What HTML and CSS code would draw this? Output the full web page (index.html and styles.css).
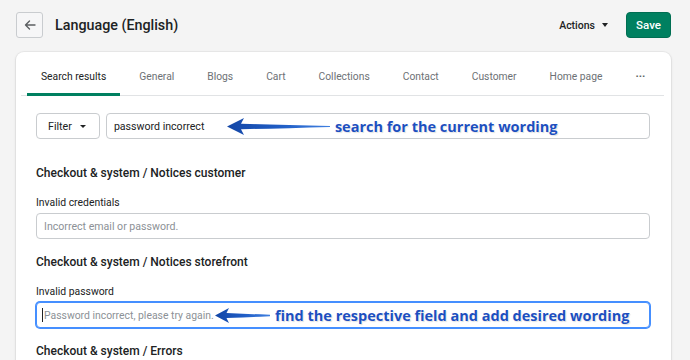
FILE: index.html
```html
<!DOCTYPE html>
<html lang="en">
<head>
  <meta charset="UTF-8">
  <meta name="viewport" content="width=device-width, initial-scale=1.0">
  <title>Language (English)</title>
  <link rel="stylesheet" href="styles.css">
</head>
<body>
  <header class="topbar">
    <button class="back-btn" aria-label="Back">
      <svg width="14" height="14" viewBox="0 0 14 14" fill="none" stroke="#5c5f62" stroke-width="1.4" stroke-linecap="round" stroke-linejoin="round">
        <path d="M12 7H2.5M6.5 3L2.5 7l4 4"/>
      </svg>
    </button>
    <h1 class="page-title">Language (English)</h1>
    <div class="actions">Actions <span class="caret"></span></div>
    <button class="save-btn">Save</button>
  </header>

  <main class="card">
    <nav class="tabs">
      <a class="tab active">Search results</a>
      <a class="tab">General</a>
      <a class="tab">Blogs</a>
      <a class="tab">Cart</a>
      <a class="tab">Collections</a>
      <a class="tab">Contact</a>
      <a class="tab">Customer</a>
      <a class="tab">Home page</a>
      <a class="tab more">&middot;&middot;&middot;</a>
    </nav>

    <div class="card-body">
      <div class="search-row">
        <button class="filter-btn">Filter <span class="caret small"></span></button>
        <div class="input search-input">
          password incorrect
          <div class="note note-search">
            <svg class="arrow" width="103" height="18" viewBox="0 0 103 18">
              <defs>
                <linearGradient id="ag1" x1="0" x2="1" y1="0" y2="0">
                  <stop offset="0" stop-color="#1447a6"/>
                  <stop offset="0.5" stop-color="#1f5cc4"/>
                  <stop offset="1" stop-color="#3f7fe0"/>
                </linearGradient>
              </defs>
              <path d="M0 9 L17 0.5 L14 6.2 Q55 7.4 103 8.4 L103 9.4 Q55 10.8 14 11.8 L17 17.5 Z" fill="url(#ag1)"/>
            </svg>
            <span class="note-text">search for the current wording</span>
          </div>
        </div>
      </div>

      <section class="group">
        <h2>Checkout &amp; system / Notices customer</h2>
        <label class="field-label">Invalid credentials</label>
        <div class="input placeholder">Incorrect email or password.</div>
      </section>

      <section class="group">
        <h2>Checkout &amp; system / Notices storefront</h2>
        <label class="field-label">Invalid password</label>
        <div class="input placeholder focused">
          <span class="cursor"></span>Password incorrect, please try again.
          <div class="note note-field">
            <svg class="arrow" width="55" height="16" viewBox="0 0 55 16">
              <defs>
                <linearGradient id="ag2" x1="0" x2="1" y1="0" y2="0">
                  <stop offset="0" stop-color="#1447a6"/>
                  <stop offset="0.5" stop-color="#1f5cc4"/>
                  <stop offset="1" stop-color="#3f7fe0"/>
                </linearGradient>
              </defs>
              <path d="M0 8 L14 0.5 L11.5 5.5 Q33 6.6 55 7.3 L55 8.7 Q33 9.6 11.5 10.5 L14 15.5 Z" fill="url(#ag2)"/>
            </svg>
            <span class="note-text">find the respective field and add desired wording</span>
          </div>
        </div>
      </section>

      <section class="group">
        <h2>Checkout &amp; system / Errors</h2>
      </section>
    </div>
  </main>
</body>
</html>
```

FILE: styles.css
```css
body {
  margin: 0;
  padding: 12px 19px 0 16px;
  font-family: Roboto, "Liberation Sans", sans-serif;
  background: #f4f4f4;
  color: #202223;
  overflow: hidden;
}

button {
  font-family: inherit;
  cursor: pointer;
}

.topbar {
  display: flex;
  align-items: center;
  height: 26px;
  margin-bottom: 14px;
}

.back-btn {
  width: 27px;
  height: 26px;
  padding: 0;
  display: flex;
  align-items: center;
  justify-content: center;
  background: #f6f6f7;
  border: 1px solid #c9cccf;
  border-radius: 3px;
}

.page-title {
  margin: 0 0 0 12px;
  font-size: 14.3px;
  font-weight: 500;
  flex: 1;
}

.actions {
  display: flex;
  align-items: center;
  gap: 7px;
  font-size: 10.5px;
  font-weight: 500;
  margin-right: 18px;
}

.caret {
  display: inline-block;
  width: 0;
  height: 0;
  border-left: 3.5px solid transparent;
  border-right: 3.5px solid transparent;
  border-top: 4px solid #202223;
}

.caret.small {
  border-left-width: 3px;
  border-right-width: 3px;
  border-top-width: 3px;
}

.save-btn {
  width: 45px;
  height: 26px;
  padding: 0;
  background: #008060;
  color: #fff;
  border: 1px solid #006e52;
  border-radius: 4px;
  font-size: 11.5px;
  font-weight: 500;
}

.card {
  background: #fff;
  border-radius: 8px 8px 0 0;
  box-shadow: 0 0 0 1px rgba(63, 63, 68, 0.05), 0 1px 3px rgba(63, 63, 68, 0.15);
  height: 320px;
}

.tabs {
  display: flex;
  margin: 0 7px 0 5px;
  padding-left: 6px;
  height: 43px;
  border-bottom: 1px solid #e1e3e5;
}

.tab {
  flex-shrink: 0;
  white-space: nowrap;
  display: flex;
  align-items: center;
  padding: 7px 14px 0;
  margin-right: 5px;
  font-size: 10.3px;
  color: #6d7175;
  border-bottom: 3px solid transparent;
  margin-bottom: -1px;
}

.tab.active {
  color: #202223;
  border-bottom-color: #008060;
}

.tab.more {
  color: #5c5f62;
  font-weight: 700;
  font-size: 11px;
}

.card-body {
  padding: 17px 21px 0 20px;
}

.search-row {
  display: flex;
  gap: 6px;
  margin-bottom: 26px;
}

.filter-btn {
  display: flex;
  align-items: center;
  gap: 8px;
  height: 26px;
  padding: 0 13px 0 11px;
  background: #fff;
  border: 1px solid #c9cccf;
  border-radius: 4px;
  font-size: 10.7px;
  color: #202223;
}

.input {
  position: relative;
  display: flex;
  align-items: center;
  height: 26px;
  box-sizing: border-box;
  padding: 0 7px;
  border: 1px solid #c9cccf;
  border-radius: 4px;
  font-size: 10.6px;
  color: #202223;
  background: #fff;
}

.search-input {
  flex: 1;
}

.placeholder {
  color: #8c9196;
}

.focused {
  padding-left: 5px;
  font-size: 10.4px;
  border-color: #458fff;
  box-shadow: 0 0 0 1px #458fff;
}

.cursor {
  width: 1px;
  height: 14px;
  margin-right: 1px;
  background: #202223;
}

.group h2 {
  margin: 0;
  font-size: 12px;
  font-weight: 500;
  line-height: 16px;
}

.field-label {
  display: block;
  margin: 15px 0 3px;
  font-size: 10.4px;
  line-height: 14px;
}

.group {
  margin-bottom: 15px;
}

.note {
  position: absolute;
  top: 50%;
  transform: translateY(-50%);
  display: flex;
  align-items: center;
  gap: 5px;
}

.note-search {
  left: 120px;
}

.note-field {
  left: 178px;
}

.arrow {
  display: block;
  filter: drop-shadow(0 0 0.6px rgba(255, 255, 255, 0.9));
}

.note-text {
  font-family: "Open Sans", "Noto Sans", sans-serif;
  font-weight: 700;
  font-size: 14.5px;
  color: #1c4fbf;
  white-space: nowrap;
  text-shadow: 0 0 1px #fff, 0 0 2px #fff, 1px 1px 1px rgba(0, 0, 0, 0.15);
}
```
